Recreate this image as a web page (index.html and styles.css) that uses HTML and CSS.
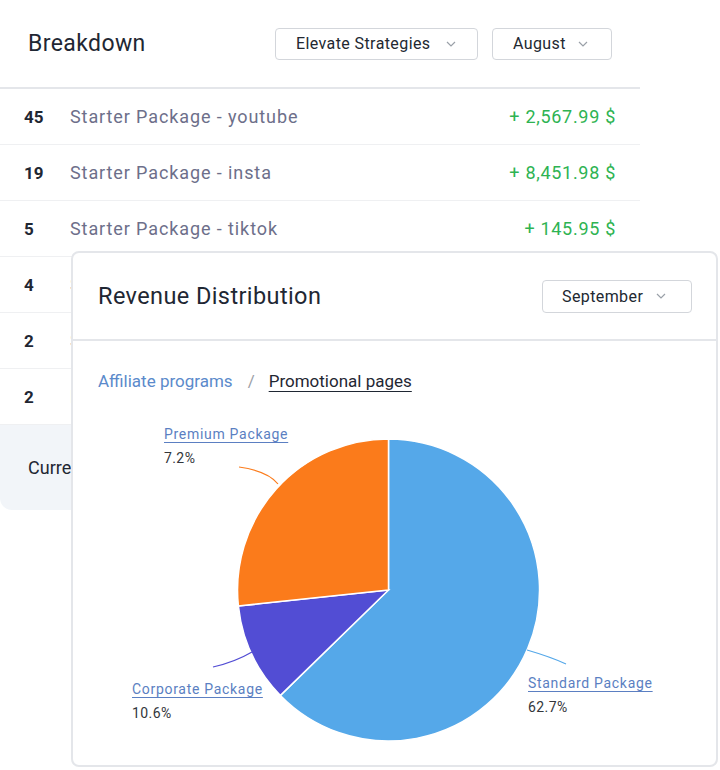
FILE: index.html
```html
<!DOCTYPE html>
<html lang="en">
<head>
<meta charset="utf-8">
<title>Breakdown</title>
<link rel="stylesheet" href="styles.css">
</head>
<body>
<div class="page">
  <div class="breakdown">
    <div class="bd-header">
      <h2 class="bd-title">Breakdown</h2>
      <div class="bd-filters">
        <button class="select select-client">Elevate Strategies
          <svg class="chev" width="10" height="6" viewBox="0 0 10 6"><path d="M1 1 L5 5 L9 1" fill="none" stroke="#9aa0a8" stroke-width="1.2"/></svg>
        </button>
        <button class="select select-month">August
          <svg class="chev" width="10" height="6" viewBox="0 0 10 6"><path d="M1 1 L5 5 L9 1" fill="none" stroke="#9aa0a8" stroke-width="1.2"/></svg>
        </button>
      </div>
    </div>
    <ul class="bd-rows">
      <li class="bd-row"><span class="qty">45</span><span class="name">Starter Package - youtube</span><span class="amount">+ 2,567.99 $</span></li>
      <li class="bd-row"><span class="qty">19</span><span class="name">Starter Package - insta</span><span class="amount">+ 8,451.98 $</span></li>
      <li class="bd-row"><span class="qty">5</span><span class="name">Starter Package - tiktok</span><span class="amount">+ 145.95 $</span></li>
      <li class="bd-row"><span class="qty">4</span><span class="name">Starter Package - facebook</span><span class="amount">+ 96.40 $</span></li>
      <li class="bd-row"><span class="qty">2</span><span class="name">Standard Package - youtube</span><span class="amount">+ 58.00 $</span></li>
      <li class="bd-row"><span class="qty">2</span><span class="name">Premium Package - insta</span><span class="amount">+ 49.90 $</span></li>
    </ul>
    <div class="bd-footer">Current total</div>
  </div>

  <section class="rev-card">
    <header class="rev-header">
      <h2 class="rev-title">Revenue Distribution</h2>
      <button class="select select-rev">September
        <svg class="chev" width="10" height="6" viewBox="0 0 10 6"><path d="M1 1 L5 5 L9 1" fill="none" stroke="#9aa0a8" stroke-width="1.2"/></svg>
      </button>
    </header>
    <div class="rev-body">
      <nav class="tabs">
        <a class="tab">Affiliate programs</a>
        <span class="tab-sep">/</span>
        <a class="tab tab-active">Promotional pages</a>
      </nav>
      <div class="chart">
        <svg class="pie" width="620" height="355" viewBox="0 0 620 355">
          <path d="M290.5 185 L290.5 34 A151 151 0 1 1 182.4 290.4 Z" fill="#55a8e9" stroke="#ffffff" stroke-width="1.5"/>
          <path d="M290.5 185 L182.4 290.4 A151 151 0 0 1 140.4 201 Z" fill="#524dd4" stroke="#ffffff" stroke-width="1.5"/>
          <path d="M290.5 185 L140.4 201 A151 151 0 0 1 290.5 34 Z" fill="#fb7b1b" stroke="#ffffff" stroke-width="1.5"/>
          <path d="M141 62 Q170 66 180 79" fill="none" stroke="#fb7b1b" stroke-width="1.2"/>
          <path d="M115 262 Q137 257 154 247" fill="none" stroke="#524dd4" stroke-width="1.2"/>
          <path d="M429 245 Q453 252 468 259" fill="none" stroke="#55a8e9" stroke-width="1.2"/>
        </svg>
        <div class="pie-label label-premium"><a class="pie-name">Premium Package</a><span class="pie-pct">7.2%</span></div>
        <div class="pie-label label-corporate"><a class="pie-name">Corporate Package</a><span class="pie-pct">10.6%</span></div>
        <div class="pie-label label-standard"><a class="pie-name">Standard Package</a><span class="pie-pct">62.7%</span></div>
      </div>
    </div>
  </section>
</div>
</body>
</html>
```
FILE: styles.css
```css
* { box-sizing: border-box; }
html, body { margin: 0; padding: 0; background: #ffffff; }
body {
  font-family: Roboto, "Liberation Sans", Arial, sans-serif;
  color: #1f2733;
  width: 720px;
  height: 770px;
  overflow: hidden;
}
.page { position: relative; width: 720px; height: 770px; }

.breakdown {
  width: 640px;
  background: #ffffff;
  border-radius: 0 0 10px 10px;
}
.bd-header {
  height: 89px;
  display: flex;
  align-items: center;
  justify-content: space-between;
  padding: 0 28px 0 28px;
  border-bottom: 2px solid #e4e6ea;
}
.bd-title {
  margin: 0;
  font-size: 23px;
  font-weight: 400;
  color: #1f2733;
  letter-spacing: 0.4px;
}
.bd-filters { display: flex; gap: 14px; }

.select {
  font-family: inherit;
  font-size: 16px;
  letter-spacing: 0.4px;
  color: #222831;
  background: #ffffff;
  border: 1px solid #d3d6db;
  border-radius: 4px;
  height: 32px;
  padding: 0 0 0 20px;
  display: flex;
  align-items: center;
  gap: 14px;
  cursor: pointer;
}
.select-client { width: 203px; gap: 16px; }
.select-month { width: 120px; gap: 12px; }
.select-rev { width: 150px; height: 33px; padding-left: 19px; gap: 13px; }
.chev { display: block; }

.bd-rows { list-style: none; margin: 0; padding: 0; }
.bd-row {
  height: 56px;
  display: flex;
  align-items: center;
  padding: 0 24px;
  border-bottom: 1px solid #eff0f2;
  font-size: 18px;
}
.qty { width: 46px; font-weight: 700; font-size: 17px; color: #1f2733; }
.name { flex: 1; color: #6d6f8a; letter-spacing: 0.9px; }
.amount { color: #2eb352; letter-spacing: 0.7px; }

.bd-footer {
  height: 85px;
  background: #f2f5f9;
  border-radius: 0 0 0 12px;
  display: flex;
  align-items: center;
  padding: 0 28px;
  font-size: 18px;
  color: #1f2733;
}

.rev-card {
  position: absolute;
  left: 71px;
  top: 251px;
  width: 647px;
  height: 516px;
  background: #ffffff;
  border: 2px solid #e4e6ea;
  border-radius: 8px;
  overflow: hidden;
}
.rev-header {
  height: 88px;
  display: flex;
  align-items: center;
  justify-content: space-between;
  padding: 0 24px 0 25px;
  border-bottom: 2px solid #e4e6ea;
}
.rev-title {
  margin: 0;
  font-size: 23.5px;
  font-weight: 400;
  color: #1f2733;
  letter-spacing: 0.4px;
}
.rev-body { padding: 28px 25px 0; }
.tabs {
  display: flex;
  align-items: center;
  height: 24px;
  font-size: 17px;
}
.tab { color: #5b8acb; cursor: pointer; }
.tab-sep { color: #9ca0a8; margin: 0 14px 0 15px; }
.tab-active {
  color: #1f2733;
  text-decoration: underline;
  text-underline-offset: 4px;
  text-decoration-thickness: 1px;
}

.chart {
  position: relative;
  margin-top: 12px;
  height: 355px;
}
.pie { position: absolute; left: 0; top: 0; }
.pie-label {
  position: absolute;
  display: flex;
  flex-direction: column;
  font-size: 14px;
  line-height: 24px;
  letter-spacing: 0.7px;
}
.pie-name {
  color: #5b7fc2;
  text-decoration: underline;
  text-underline-offset: 3px;
  white-space: nowrap;
}
.pie-pct { color: #33363b; letter-spacing: 0.4px; }
.label-premium { left: 66px; top: 17px; }
.label-corporate { left: 34px; top: 272px; }
.label-standard { left: 430px; top: 266px; }
```
